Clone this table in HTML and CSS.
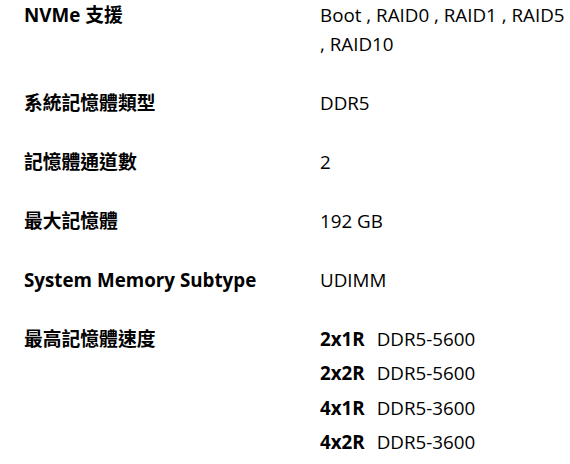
FILE: index.html
```html
<!DOCTYPE html>
<html lang="zh-Hant">
<head>
<meta charset="utf-8">
<link rel="stylesheet" href="styles.css">
</head>
<body>
<div class="spec">
  <div class="row">
    <div class="label">NVMe 支援</div>
    <div class="value">Boot , RAID0 , RAID1 , RAID5 , RAID10</div>
  </div>
  <div class="row">
    <div class="label">系統記憶體類型</div>
    <div class="value">DDR5</div>
  </div>
  <div class="row">
    <div class="label">記憶體通道數</div>
    <div class="value">2</div>
  </div>
  <div class="row">
    <div class="label">最大記憶體</div>
    <div class="value">192 GB</div>
  </div>
  <div class="row">
    <div class="label">System Memory Subtype</div>
    <div class="value">UDIMM</div>
  </div>
  <div class="row">
    <div class="label">最高記憶體速度</div>
    <div class="value speeds">
      <div class="speed"><b>2x1R</b>DDR5-5600</div>
      <div class="speed"><b>2x2R</b>DDR5-5600</div>
      <div class="speed"><b>4x1R</b>DDR5-3600</div>
      <div class="speed"><b>4x2R</b>DDR5-3600</div>
    </div>
  </div>
</div>
</body>
</html>
```
FILE: styles.css
```css
html, body {
  margin: 0;
  padding: 0;
  background: #fff;
}
body {
  font-family: "Open Sans", "Noto Sans CJK TC", sans-serif;
  font-size: 18.8px;
  line-height: 29px;
  color: #000;
}
.spec {
  padding: 0.5px 0 0 24px;
  display: flex;
  flex-direction: column;
  gap: 30px;
}
.row {
  display: grid;
  grid-template-columns: 296px 250px;
}
.label {
  font-weight: 700;
}
.speeds {
  display: flex;
  flex-direction: column;
  gap: 5.5px;
}
.speed b {
  font-weight: 700;
  margin-right: 12px;
}
```
